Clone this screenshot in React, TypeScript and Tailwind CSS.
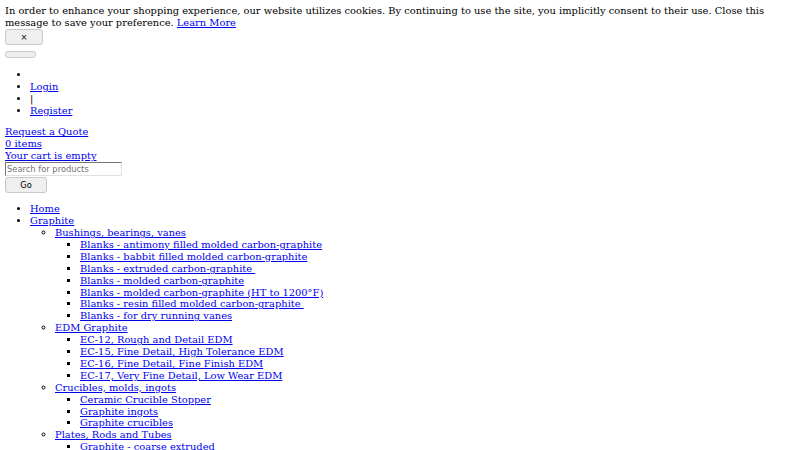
const serif = "font-['DejaVu_Serif','Liberation_Serif',serif]"

const nav = [
  {
    label: 'Bushings, bearings, vanes',
    items: [
      'Blanks - antimony filled molded carbon-graphite',
      'Blanks - babbit filled molded carbon-graphite',
      'Blanks - extruded carbon-graphite\u00a0',
      'Blanks - molded carbon-graphite',
      'Blanks - molded carbon-graphite (HT to 1200°F)',
      'Blanks - resin filled molded carbon-graphite\u00a0',
      'Blanks - for dry running vanes',
    ],
  },
  {
    label: 'EDM Graphite',
    items: [
      'EC-12, Rough and Detail EDM',
      'EC-15, Fine Detail, High Tolerance EDM',
      'EC-16, Fine Detail, Fine Finish EDM',
      'EC-17, Very Fine Detail, Low Wear EDM',
    ],
  },
  {
    label: 'Crucibles, molds, ingots',
    items: ['Ceramic Crucible Stopper', 'Graphite ingots', 'Graphite crucibles'],
  },
  {
    label: 'Plates, Rods and Tubes',
    items: ['Graphite - coarse extruded', 'Graphite - fine grain molded'],
  },
]

const A = ({ children }: { children: React.ReactNode }) => (
  <a href="#" className="text-[#0000ee] underline">
    {children}
  </a>
)

const btn =
  "block bg-[#efefef] border border-[#c8c8c8] rounded-[3px] font-['DejaVu_Sans','Liberation_Sans',sans-serif] text-[8.33px] text-black"

export default function App() {
  return (
    <div className={`${serif} text-[9.9px] leading-[11.9px] text-black bg-white p-[5px] h-[450px] overflow-hidden`}>
      <p>
        In order to enhance your shopping experience, our website utilizes cookies. By continuing to use the site, you
        implicitly consent to their use. Close this message to save your preference. <A>Learn More</A>
      </p>
      <button className={`${btn} w-[38px] h-[16px] leading-[14px]`}>×</button>
      <button className={`${btn} w-[31px] h-[7px] mt-[6px]`}></button>

      <ul className="list-disc pl-[25px] mt-[11px] mb-[10px]">
        <li>&nbsp;</li>
        <li>
          <A>Login</A>
        </li>
        <li>|</li>
        <li>
          <A>Register</A>
        </li>
      </ul>

      <div>
        <A>Request a Quote</A>
      </div>
      <div>
        <A>0 items</A>
      </div>
      <div>
        <A>Your cart is empty</A>
      </div>
      <input
        placeholder="Search for products"
        className="block w-[117px] h-[14px] border-t-[1px] border-l-[1px] border-b border-r border-t-[#767676] border-l-[#767676] border-b-[#e0e0e0] border-r-[#e0e0e0] px-[1px] font-['DejaVu_Sans','Liberation_Sans',sans-serif] text-[8.33px] placeholder:text-[#757575]"
      />
      <button className={`${btn} w-[42px] h-[16px] leading-[14px] mt-[1px]`}>Go</button>

      <ul className="list-disc pl-[25px] my-[10px]">
        <li>
          <A>Home</A>
        </li>
        <li>
          <A>Graphite</A>
          <ul className="list-[circle] pl-[25px]">
            {nav.map((g) => (
              <li key={g.label}>
                <A>{g.label}</A>
                <ul className="list-[square] pl-[25px]">
                  {g.items.map((i) => (
                    <li key={i}>
                      <A>{i}</A>
                    </li>
                  ))}
                </ul>
              </li>
            ))}
          </ul>
        </li>
      </ul>
    </div>
  )
}
